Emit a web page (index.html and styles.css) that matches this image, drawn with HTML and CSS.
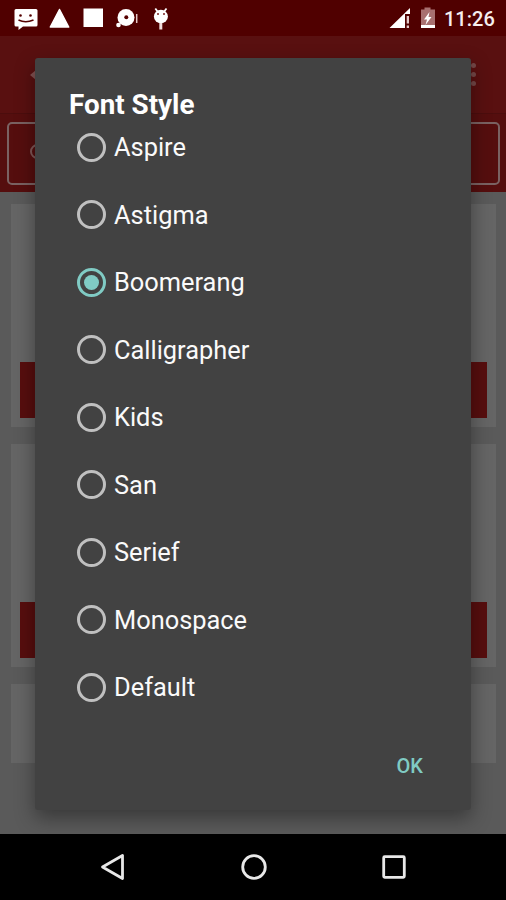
FILE: index.html
```html
<!DOCTYPE html>
<html lang="en">

<head>
     <meta charset="UTF-8">
     <meta name="viewport" content="width=device-width, initial-scale=1.0">
     <title>Font Style</title>
     <link rel="stylesheet" href="styles.css">
</head>

<body>
     <div class="phone">
          <div class="statusBar">
               <svg class="notifications" width="180" height="36" viewBox="0 0 180 36">
                    <path fill="#fff" d="M16 9h20q1.500 0 1.500 1.500V25q0 1.500-1.500 1.500H23L18.500 30v-3.500H16q-1.500 0-1.500-1.500V10.500Q14.500 9 16 9z"/>
                    <circle cx="20.500" cy="15.500" r="1.300" fill="#500"/>
                    <circle cx="30.500" cy="15.500" r="1.300" fill="#500"/>
                    <path d="M18.500 20q7 3.500 15 0" fill="none" stroke="#500" stroke-width="1.500"/>
                    <path fill="#fff" stroke="#fff" stroke-width="1.500" stroke-linejoin="round" d="M59.500 9.500l9.200 17.500H50.300z"/>
                    <rect x="83.500" y="8.500" width="19.500" height="18.500" fill="#fff"/>
                    <circle cx="126" cy="17.500" r="8.500" fill="#fff"/>
                    <circle cx="118.500" cy="25" r="2.300" fill="#fff"/>
                    <circle cx="126.300" cy="17.300" r="2" fill="#500"/>
                    <path d="M136.700 14v9" stroke="#e4c8c8" stroke-width="1.500"/>
                    <path d="M155.300 8.500l3 4M166.500 8.500l-3 4" stroke="#fff" stroke-width="1.800"/>
                    <ellipse cx="160.900" cy="16.500" rx="7" ry="6.800" fill="#fff"/>
                    <circle cx="158" cy="14" r="1" fill="#722"/>
                    <circle cx="164" cy="14" r="1" fill="#722"/>
                    <path d="M160.800 23v6.500" stroke="#f0dede" stroke-width="3"/>
               </svg>
               <div class="system">
                    <svg width="48" height="36" viewBox="0 0 48 36">
                         <path fill="#fff" d="M1.500 28L22 8v6h-5v14z"/>
                         <path fill="#e4caca" d="M18.700 16h2.300v7.500h-2.300zM18.700 25.500h2.300V28h-2.300z"/>
                         <path fill="#a87070" d="M33 9.500h3.500v-2h6v2H47V25H33z"/>
                         <path fill="#fff" d="M33 25h14v3H33zM41.500 12l-5.500 7.500h3L37.500 25l6-8H40.500z"/>
                    </svg>
                    <span class="clock">11:26</span>
               </div>
          </div>

          <div class="screen">
               <div class="toolbar">
                    <svg width="12" height="16" viewBox="0 0 12 16">
                         <path d="M10 3L4 8l6 5z" fill="#805050"/>
                    </svg>
                    <div class="menu">
                         <i></i><i></i><i></i>
                    </div>
               </div>
               <div class="search">
                    <div class="searchBox">
                         <span class="lens"></span>
                    </div>
               </div>
               <div class="cards">
                    <div class="card"><div class="bar"></div></div>
                    <div class="card"><div class="bar"></div></div>
                    <div class="card last"></div>
               </div>

               <div class="dialog">
                    <h1>Font Style</h1>
                    <div class="options">
                         <div class="option"><span class="radio"></span>Aspire</div>
                         <div class="option"><span class="radio"></span>Astigma</div>
                         <div class="option"><span class="radio checked"></span>Boomerang</div>
                         <div class="option"><span class="radio"></span>Calligrapher</div>
                         <div class="option"><span class="radio"></span>Kids</div>
                         <div class="option"><span class="radio"></span>San</div>
                         <div class="option"><span class="radio"></span>Serief</div>
                         <div class="option"><span class="radio"></span>Monospace</div>
                         <div class="option"><span class="radio"></span>Default</div>
                    </div>
                    <button class="ok">OK</button>
               </div>
          </div>

          <div class="navBar">
               <svg width="30" height="30" viewBox="0 0 30 30">
                    <path d="M24.500 3.500v23L4.500 15z"/>
               </svg>
               <svg width="30" height="30" viewBox="0 0 30 30">
                    <circle cx="15" cy="15" r="11.300"/>
               </svg>
               <svg width="30" height="30" viewBox="0 0 30 30">
                    <rect x="4.700" y="4.700" width="20.600" height="20.600" rx="1"/>
               </svg>
          </div>
     </div>
</body>

</html>
```
FILE: styles.css
```css
* {
     margin: 0px;
     padding: 0px;
     box-sizing: border-box;
     font-family: Roboto, "Liberation Sans", sans-serif;
}

.phone {
     display: flex;
     flex-direction: column;
     width: 506px;
     height: 900px;
     overflow: hidden;
     background-color: #000;
}

.statusBar {
     display: flex;
     justify-content: space-between;
     height: 36px;
     padding-right: 12px;
     background-color: #500000;
}

.system {
     display: flex;
     align-items: center;
     gap: 8px;
}

.clock {
     width: 50px;
     font-size: 20px;
     font-weight: 500;
     line-height: 36px;
     padding-top: 2px;
     color: #f6eeee;
     white-space: nowrap;
}

.screen {
     position: relative;
     height: 798px;
     background-color: #5a5a5a;
     overflow: hidden;
}

.toolbar {
     display: flex;
     justify-content: space-between;
     align-items: center;
     height: 78px;
     padding: 0px 30px 0px 26px;
     background-color: #591010;
     border-bottom: 1px solid #4c0d0d;
}

.menu {
     display: flex;
     flex-direction: column;
     gap: 4px;

     i {
          width: 5px;
          height: 5px;
          border-radius: 50%;
          background-color: #754848;
     }
}

.search {
     height: 78px;
     padding: 8px 6px 7px 7px;
     background-color: #550e0e;
}

.searchBox {
     display: flex;
     align-items: center;
     height: 63px;
     padding-left: 21px;
     border: 2px solid #7a6262;
     border-radius: 5px;
}

.lens {
     width: 15px;
     height: 15px;
     margin-bottom: 4px;
     border: 2px solid #805858;
     border-radius: 50%;
}

.cards {
     display: flex;
     flex-direction: column;
     gap: 17px;
     padding: 12px 10px 0px 11px;
}

.card {
     display: flex;
     align-items: flex-end;
     height: 223px;
     padding: 9px;
     background-color: #656565;

     .bar {
          width: 100%;
          height: 56px;
          background-color: #570e0e;
     }
}

.card.last {
     height: 79px;
}

.dialog {
     position: absolute;
     left: 35px;
     top: 22px;
     display: flex;
     flex-direction: column;
     width: 436px;
     height: 752px;
     padding: 30px 34px 0px;
     background-color: #424242;
     border-radius: 3px;
     box-shadow: 0px 8px 20px rgba(0, 0, 0, 0.38);

     h1 {
          height: 27px;
          font-size: 27.8px;
          font-weight: 700;
          line-height: 34px;
          color: #fff;
     }
}

.options {
     display: flex;
     flex-direction: column;
     padding-left: 8px;
}

.option {
     display: flex;
     align-items: center;
     gap: 8px;
     height: 67.5px;
     font-size: 25.4px;
     color: #fafafa;
}

.option:first-child {
     margin-top: -1.5px;
}

.radio {
     display: flex;
     align-items: center;
     justify-content: center;
     width: 29px;
     height: 29px;
     border: 3px solid #c0c0c0;
     border-radius: 50%;
}

.radio.checked {
     border-color: #80cbc4;
}

.radio.checked::after {
     content: "";
     width: 15px;
     height: 15px;
     border-radius: 50%;
     background-color: #80cbc4;
}

.ok {
     align-self: flex-end;
     margin: 31px 14px 0px 0px;
     border: none;
     background: none;
     font-size: 20px;
     font-weight: 500;
     line-height: 28px;
     color: #80cbc4;
}

.navBar {
     display: flex;
     justify-content: space-between;
     align-items: center;
     height: 66px;
     padding: 0px 97px 0px 98px;
     background-color: #000;

     svg {
          fill: none;
          stroke: #e8e8e8;
          stroke-width: 2.8;
          stroke-linejoin: round;
     }
}
```
